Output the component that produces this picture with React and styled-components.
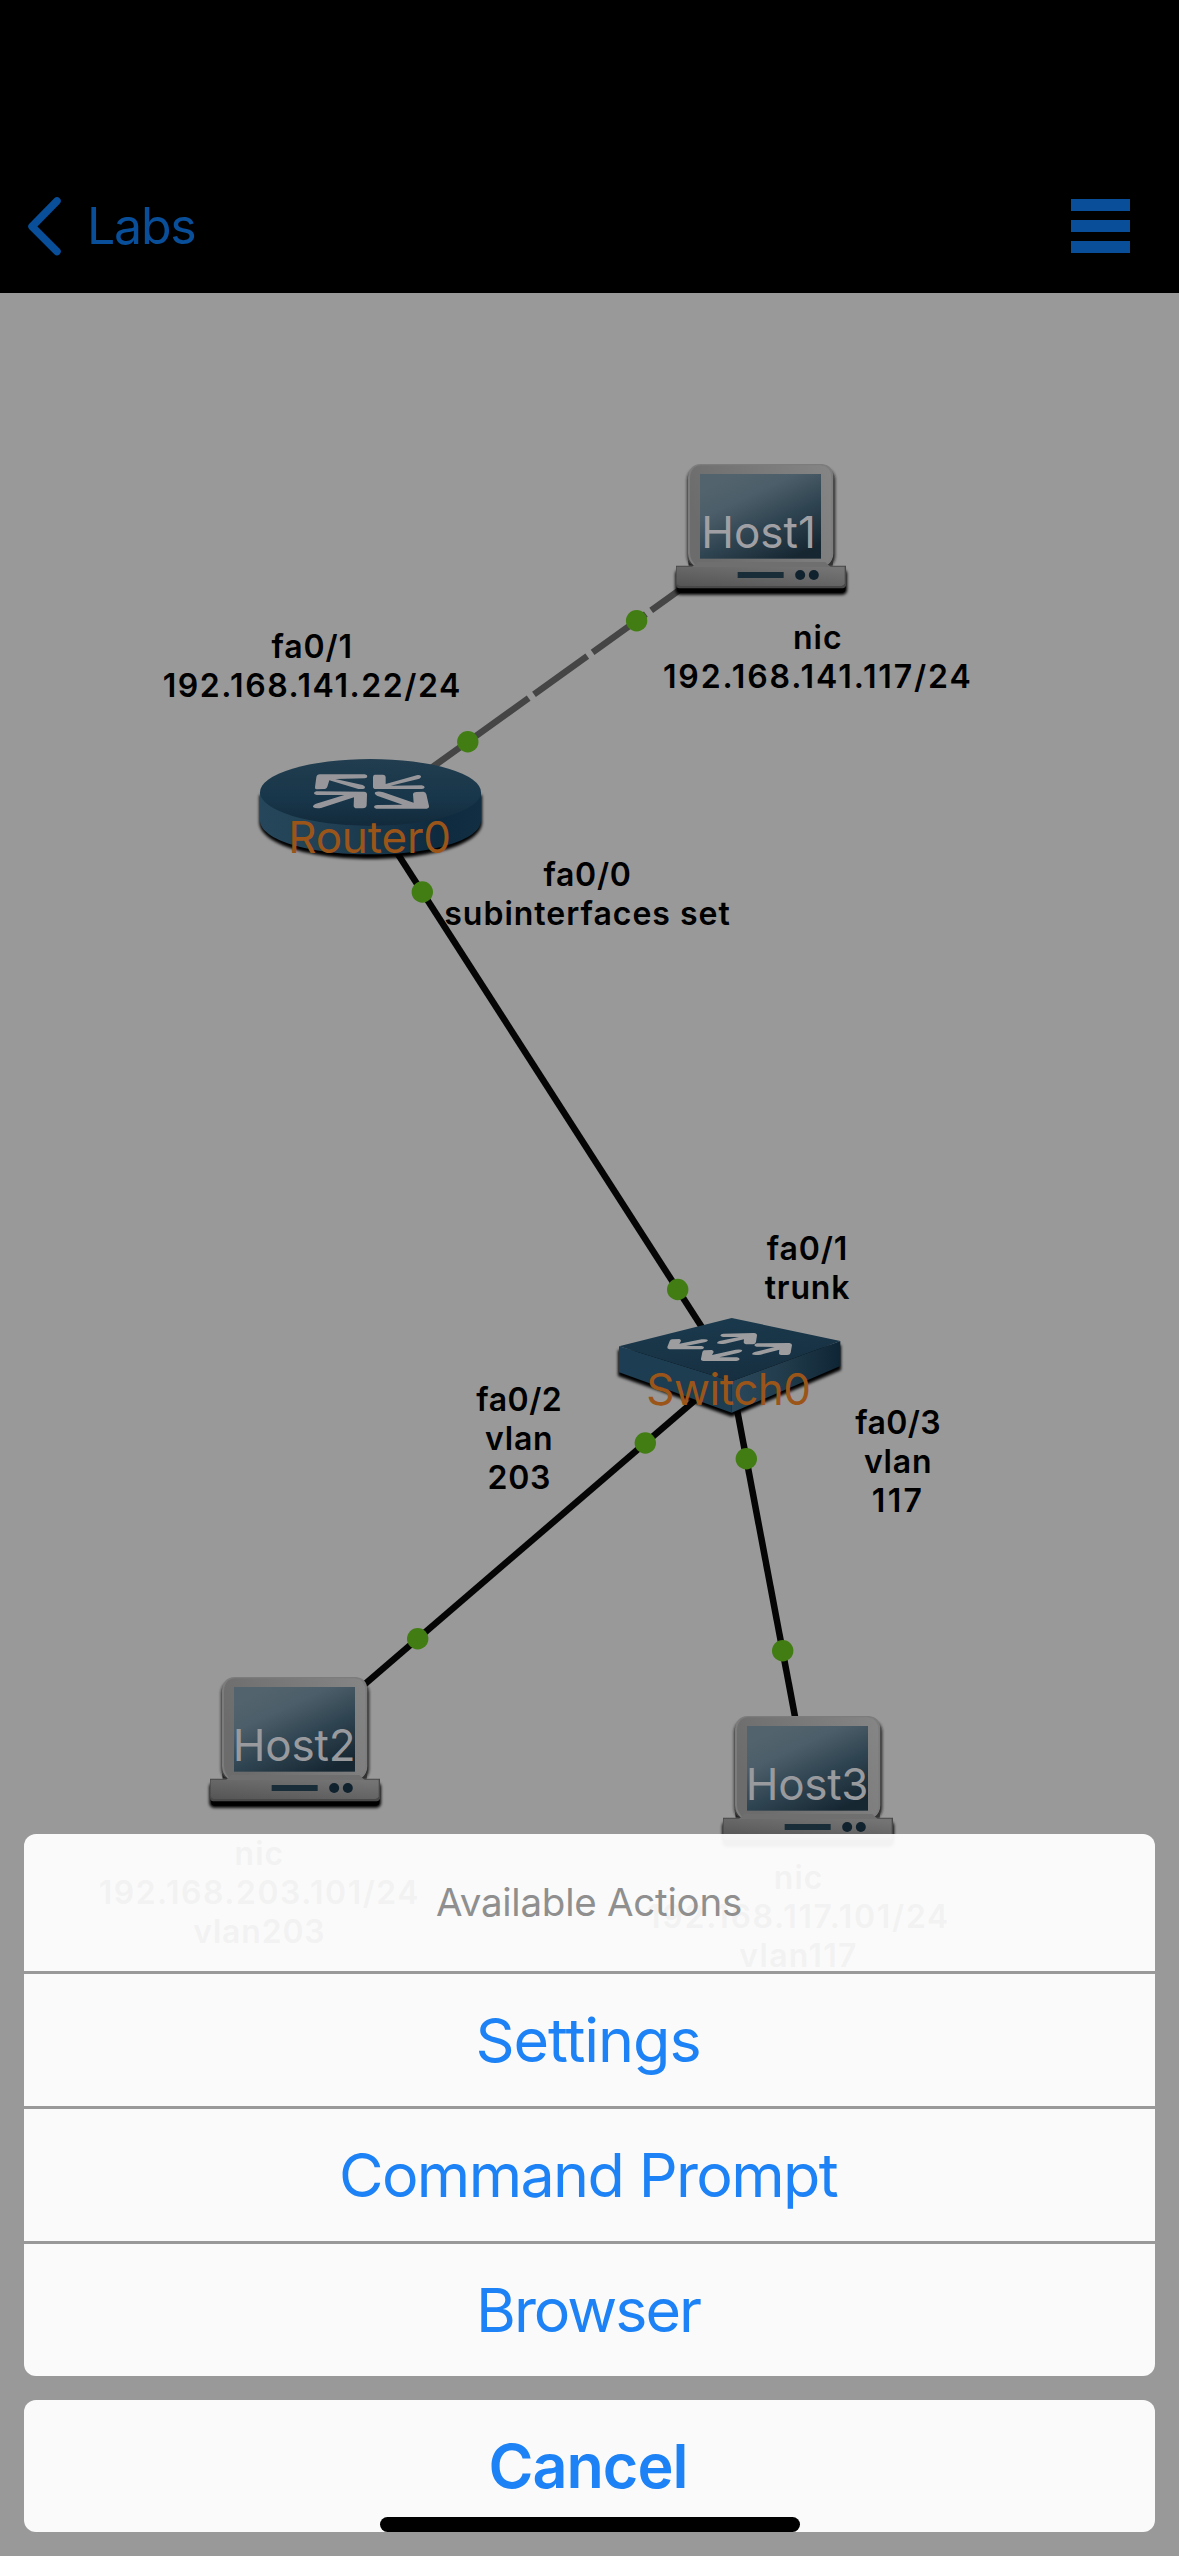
import React from "react"
import styled, { createGlobalStyle } from "styled-components"

const hosts = [
  { name: "Host1", x: 670, y: 460, labelX: 758.5, spacing: 0, color: "#a0a0a4" },
  { name: "Host2", x: 204, y: 1673, labelX: 294, spacing: -0.2, color: "#999a9e" },
  { name: "Host3", x: 717, y: 1712, labelX: 807, spacing: -0.3, color: "#999a9e" },
]

const links = [
  { x1: 416.8, y1: 778.3, x2: 761, y2: 531.6, dashed: true },
  { x1: 370.5, y1: 811.4, x2: 731, y2: 1372.5 },
  { x1: 731, y1: 1369.3, x2: 295, y2: 1744.2 },
  { x1: 731, y1: 1377.5, x2: 808, y2: 1785.4 },
]

const ports = [
  [636.6, 620.7],
  [467.8, 741.7],
  [422.3, 892],
  [677.7, 1289.5],
  [645.3, 1443],
  [746.3, 1458.7],
  [417.7, 1638.7],
  [782.7, 1650.7],
]

const labels = [
  { x: 817.8, y: 618, lines: [["nic", 1], ["192.168.141.117/24", 1.9]] },
  { x: 312.2, y: 627, lines: [["fa0/1", 0.9], ["192.168.141.22/24", 1.55]] },
  { x: 587.5, y: 855, lines: [["fa0/0", 0.7], ["subinterfaces set", 1]] },
  { x: 807.5, y: 1229, lines: [["fa0/1", 0.9], ["trunk", 0.85]] },
  { x: 519.3, y: 1380, lines: [["fa0/2", 0.5], ["vlan", 0.8], ["203", 0.8]] },
  { x: 898.1, y: 1403, lines: [["fa0/3", 0.4], ["vlan", 0.8], ["117", 2.4]] },
  { x: 259.4, y: 1833.5, lines: [["nic", 1], ["192.168.203.101/24", 1.5], ["vlan203", 0.8]] },
  { x: 798.6, y: 1857.5, lines: [["nic", 1], ["192.168.117.101/24", 1.7], ["vlan117", 1.3]] },
]

const actions = [
  { title: "Settings", spacing: -1.05 },
  { title: "Command Prompt", spacing: -1.65 },
  { title: "Browser", spacing: -2 },
]

const HostIcon = () => (
  <svg width="190" height="140" viewBox="90 60 570 420">
    <defs>
      <linearGradient id="hostLid" x1="0" y1="0.4" x2="1" y2="0.1">
        <stop offset="0" stopColor="#6c6c6c" />
        <stop offset="1" stopColor="#858585" />
      </linearGradient>
      <linearGradient id="hostBase" x1="0" y1="1" x2="0.8" y2="0">
        <stop offset="0" stopColor="#555555" />
        <stop offset="1" stopColor="#747474" />
      </linearGradient>
      <linearGradient id="hostScreen" x1="0.15" y1="0.1" x2="0.75" y2="1">
        <stop offset="0" stopColor="#52636d" />
        <stop offset="0.25" stopColor="#4c5e69" />
        <stop offset="0.6" stopColor="#2f4451" />
        <stop offset="1" stopColor="#162732" />
      </linearGradient>
      <filter id="hostShadow" x="-10%" y="-10%" width="120%" height="130%">
        <feGaussianBlur stdDeviation="4.500" />
      </filter>
    </defs>
    <rect x="142" y="84" width="443" height="300" rx="36" fill="#1c1c1c" filter="url(#hostShadow)" />
    <rect x="106" y="388" width="515" height="76" rx="14" fill="#000" filter="url(#hostShadow)" />
    <rect x="112" y="400" width="504" height="58" rx="10" fill="#000" />
    <path
      d="M182 72H546Q580 76 580 112V340Q580 364 561 377H162Q144 364 144 340V112Q146 74 182 72Z"
      fill="#7c7c7c"
    />
    <path
      d="M184 76H542Q574 80 574 114V338Q574 362 552 380H172Q150 362 150 338V114Q152 78 184 76Z"
      fill="url(#hostLid)"
    />
    <rect x="180" y="102" width="363" height="254" fill="url(#hostScreen)" />
    <path d="M144 358Q148 372 162 377H146Z" fill="#242424" />
    <path d="M580 358Q576 370 558 377H578Z" fill="#333" />
    <path d="M108 377H618V436Q616 445 608 445H118Q108 443 108 434Z" fill="#484848" />
    <path d="M110 380H614V430Q612 438 604 438H122Q112 437 110 429Z" fill="url(#hostBase)" />
    <path d="M172 366H556L572 381H156Z" fill="#6f6f6f" />
    <rect x="293" y="396" width="138" height="18" fill="#192d38" />
    <circle cx="480.500" cy="405" r="15" fill="#10222d" />
    <circle cx="521.500" cy="405" r="15" fill="#10222d" />
  </svg>
)

const RouterIcon = () => (
  <svg width="260" height="140" viewBox="0 0 780 420">
    <defs>
      <linearGradient id="routerTop" x1="0" y1="0" x2="0" y2="1">
        <stop offset="0" stopColor="#213d4f" />
        <stop offset="0.6" stopColor="#18364a" />
        <stop offset="1" stopColor="#122a3b" />
      </linearGradient>
      <linearGradient id="routerSide" x1="0" y1="0" x2="1" y2="0">
        <stop offset="0" stopColor="#26475b" />
        <stop offset="0.35" stopColor="#203f53" />
        <stop offset="0.8" stopColor="#0e2a3e" />
        <stop offset="1" stopColor="#112e42" />
      </linearGradient>
      <filter id="routerShadow" x="-10%" y="-10%" width="120%" height="130%">
        <feGaussianBlur stdDeviation="5" />
      </filter>
    </defs>
    <path
      d="M58 165V250C64 315 215 357 391 357S720 315 726 250V165Z"
      fill="#000"
      filter="url(#routerShadow)"
    />
    <path d="M60 156V242C62 300 208 343 391 343S722 300 723 242V156Z" fill="url(#routerSide)" />
    <ellipse cx="391.500" cy="157" rx="331.500" ry="100" fill="url(#routerTop)" />
    <g fill="#97979b">
      <path d="M240 103L374 103Q382 104 382 109Q382 115 374 115L286 117L368 135Q376 139 375 143Q373 148 365 147L355 147L268 121L262 140Q260 147 250 147L230 148Q224 148 225 142L229 112Q230 103 240 103Z" />
      <path d="M404 104L428 104Q437 105 437 112L437 132L525 107Q537 103 543 108Q545 112 538 116L452 137L545 136Q554 137 554 142Q553 147 546 147L408 147Q399 147 399 140L399 112Q399 105 404 104Z" />
      <path d="M229 154L372 155Q381 156 381 163L380 196Q379 205 368 205L350 205Q341 204 341 197L342 172L243 204Q225 206 219 201Q218 195 228 191L313 165L230 165Q222 164 222 160Q222 155 229 154Z" />
      <path d="M411 155Q420 154 430 157L521 188L519 163Q520 156 530 156L550 155Q557 156 559 163L567 198Q568 205 560 206L409 206Q402 205 402 200Q403 195 411 195L488 194L411 167Q404 163 404 159Q406 155 411 155Z" />
    </g>
  </svg>
)

const SwitchIcon = () => (
  <svg width="260" height="130" viewBox="0 240 780 390">
    <defs>
      <linearGradient id="switchTop" x1="0.2" y1="0" x2="0.6" y2="1">
        <stop offset="0" stopColor="#1b3a4e" />
        <stop offset="1" stopColor="#162f40" />
      </linearGradient>
      <linearGradient id="switchLeft" x1="0" y1="0" x2="1" y2="0">
        <stop offset="0" stopColor="#1c3d53" />
        <stop offset="1" stopColor="#1f3d50" />
      </linearGradient>
      <linearGradient id="switchRight" x1="0" y1="0" x2="1" y2="0">
        <stop offset="0" stopColor="#2a485b" />
        <stop offset="0.5" stopColor="#213b4b" />
        <stop offset="1" stopColor="#0e2535" />
      </linearGradient>
      <filter id="switchShadow" x="-10%" y="-10%" width="120%" height="130%">
        <feGaussianBlur stdDeviation="5" />
      </filter>
    </defs>
    <path d="M54 390V468L395 590L723 450V375Z" fill="#000" filter="url(#switchShadow)" />
    <path d="M57 379L395 484V578L57 457Z" fill="url(#switchLeft)" />
    <path d="M395 484L721 363V438L395 578Z" fill="url(#switchRight)" />
    <path d="M57 379L395 294L721 363L395 484Z" fill="url(#switchTop)" />
    <g fill="#9d9da0">
      <path d="M216 358L238 357Q243 358 243 363L238 371L305 358Q322 356 324 361Q322 366 314 367L258 378L305 378Q313 380 312 384Q309 388 302 388L208 388Q201 387 202 381L209 363Q211 358 216 358Z" />
      <path d="M370 341L462 339Q471 340 471 346L468 366Q466 373 459 373L438 373Q431 372 431 367L432 358L375 371Q359 373 351 370Q351 366 358 363L417 351L369 351Q361 350 361 346Q363 342 370 341Z" />
      <path d="M312 391L335 390Q341 391 341 396L336 405L407 389Q424 387 427 391Q426 396 417 398L358 412L411 412Q419 413 419 418Q416 423 409 423L310 423Q302 422 303 416L307 397Q308 392 312 391Z" />
      <path d="M472 370L568 369Q576 370 576 375L572 398Q570 405 562 405L543 405Q536 404 537 399L538 389L482 404Q463 407 456 403Q456 398 464 396L524 381L470 380Q463 379 463 375Q465 371 472 370Z" />
    </g>
  </svg>
)

const App = () => {
  return (
    <>
      <GlobalStyle />
      <Screen>
        <NavBar>
          <BackButton type="button">
            <svg width="34" height="60" viewBox="0 0 34 60">
              <path
                d="M30 5L5 30.500L30 55.500"
                fill="none"
                stroke="#084e98"
                strokeWidth="7.500"
                strokeLinecap="round"
                strokeLinejoin="round"
              />
            </svg>
            <span>Labs</span>
          </BackButton>
          <MenuButton type="button" aria-label="Menu">
            <MenuBar />
            <MenuBar />
            <MenuBar />
          </MenuButton>
        </NavBar>

        <Topology>
          <Links viewBox="0 293 1179 2263">
            {links.map((link, index) => (
              <line
                key={index}
                x1={link.x1}
                y1={link.y1}
                x2={link.x2}
                y2={link.y2}
                stroke={link.dashed ? "#454545" : "#050505"}
                strokeWidth="6.500"
                strokeDasharray={link.dashed ? "65.5 6.600" : undefined}
              />
            ))}
            {ports.map(([x, y]) => (
              <circle key={`${x}-${y}`} cx={x} cy={y} r="10.700" fill="#417d13" />
            ))}
          </Links>
          {hosts.map((host) => (
            <Device key={host.name} x={host.x} y={host.y}>
              <HostIcon />
            </Device>
          ))}
          <Device x={240} y={740}>
            <RouterIcon />
          </Device>
          <Device x={600} y={1300}>
            <SwitchIcon />
          </Device>
          {hosts.map((host) => (
            <DeviceName key={host.name} x={host.labelX} y={host.y + 45} $color={host.color} $spacing={host.spacing}>
              {host.name}
            </DeviceName>
          ))}
          <DeviceName x={369.5} y={810} $spacing={-0.2}>Router0</DeviceName>
          <DeviceName x={728.5} y={1362} $spacing={-0.5}>Switch0</DeviceName>
          {labels.map((label) => (
            <PortLabel key={`${label.x}-${label.y}`} x={label.x} y={label.y}>
              {label.lines.map(([text, spacing]) => (
                <LabelLine key={text} $spacing={spacing}>{text}</LabelLine>
              ))}
            </PortLabel>
          ))}
        </Topology>

        <ActionSheet>
          <ActionGroup>
            <SheetTitle>Available Actions</SheetTitle>
            {actions.map((action) => (
              <ActionButton type="button" key={action.title} $spacing={action.spacing}>
                {action.title}
              </ActionButton>
            ))}
          </ActionGroup>
          <ActionGroup>
            <ActionButton type="button" $bold $spacing={-1}>Cancel</ActionButton>
          </ActionGroup>
        </ActionSheet>
        <HomeIndicator />
      </Screen>
    </>
  )
}

export default App

const GlobalStyle = createGlobalStyle`
  * {
    box-sizing: border-box;
  }

  body {
    margin: 0;
    background: #999;
    font-family: Inter, "Liberation Sans", sans-serif;
  }

  button {
    margin: 0;
    padding: 0;
    border: none;
    background: none;
    font-family: inherit;
  }

  svg {
    display: block;
  }
`

const Screen = styled.div`
  position: relative;
  display: flex;
  flex-direction: column;
  width: 1179px;
  height: 2556px;
  overflow: hidden;
  background: #999;
`

const NavBar = styled.header`
  flex: none;
  display: flex;
  justify-content: space-between;
  align-items: center;
  height: 293px;
  padding: 159px 49px 0 27px;
  background: #000;
`

const BackButton = styled.button`
  display: flex;
  align-items: center;
  gap: 26px;
  color: #084e98;
  font-size: 50px;
  line-height: 60px;
  letter-spacing: -1.2px;
`

const MenuButton = styled.button`
  display: flex;
  flex-direction: column;
  gap: 9px;
`

const MenuBar = styled.span`
  width: 59px;
  height: 12px;
  background: #084e98;
`

/* device and label positions are measured from the top of the screen, header included */
const Topology = styled.main`
  flex: 1;
`

const Links = styled.svg`
  width: 1179px;
  height: 2263px;
`

const Device = styled.div`
  position: absolute;
  left: ${(props) => props.x}px;
  top: ${(props) => props.y}px;
`

const DeviceName = styled.p`
  position: absolute;
  left: ${(props) => props.x}px;
  top: ${(props) => props.y}px;
  transform: translateX(-50%);
  margin: 0;
  color: ${(props) => props.$color || "#9b5519"};
  font-size: 44px;
  line-height: 54px;
  letter-spacing: ${(props) => props.$spacing}px;
`

const PortLabel = styled.div`
  position: absolute;
  left: ${(props) => props.x}px;
  top: ${(props) => props.y}px;
  transform: translateX(-50%);
  display: flex;
  flex-direction: column;
  align-items: center;
  color: #000;
  font-size: 32px;
  font-weight: 600;
  line-height: 39px;
`

const LabelLine = styled.span`
  letter-spacing: ${(props) => props.$spacing}px;
  white-space: nowrap;
`

const ActionSheet = styled.section`
  position: absolute;
  left: 24px;
  right: 24px;
  bottom: 24px;
  display: flex;
  flex-direction: column;
  gap: 24px;
`

const ActionGroup = styled.div`
  display: flex;
  flex-direction: column;
  gap: 3px;
  border-radius: 12px;
  overflow: hidden;
`

const SheetTitle = styled.h1`
  display: flex;
  justify-content: center;
  align-items: center;
  height: 137px;
  margin: 0;
  padding: 0 1px 2px 0;
  background: rgba(255, 255, 255, 0.95);
  color: #8f8f8f;
  font-size: 38.5px;
  font-weight: 400;
  letter-spacing: -0.24px;
`

const ActionButton = styled.button`
  height: 132px;
  padding-right: 3px;
  background: rgba(255, 255, 255, 0.95);
  color: #1c82f5;
  font-size: 61px;
  font-weight: ${(props) => (props.$bold ? 600 : 400)};
  letter-spacing: ${(props) => props.$spacing}px;
`

const HomeIndicator = styled.div`
  position: absolute;
  left: 380px;
  bottom: 24px;
  width: 420px;
  height: 15px;
  border-radius: 8px;
  background: #000;
`
